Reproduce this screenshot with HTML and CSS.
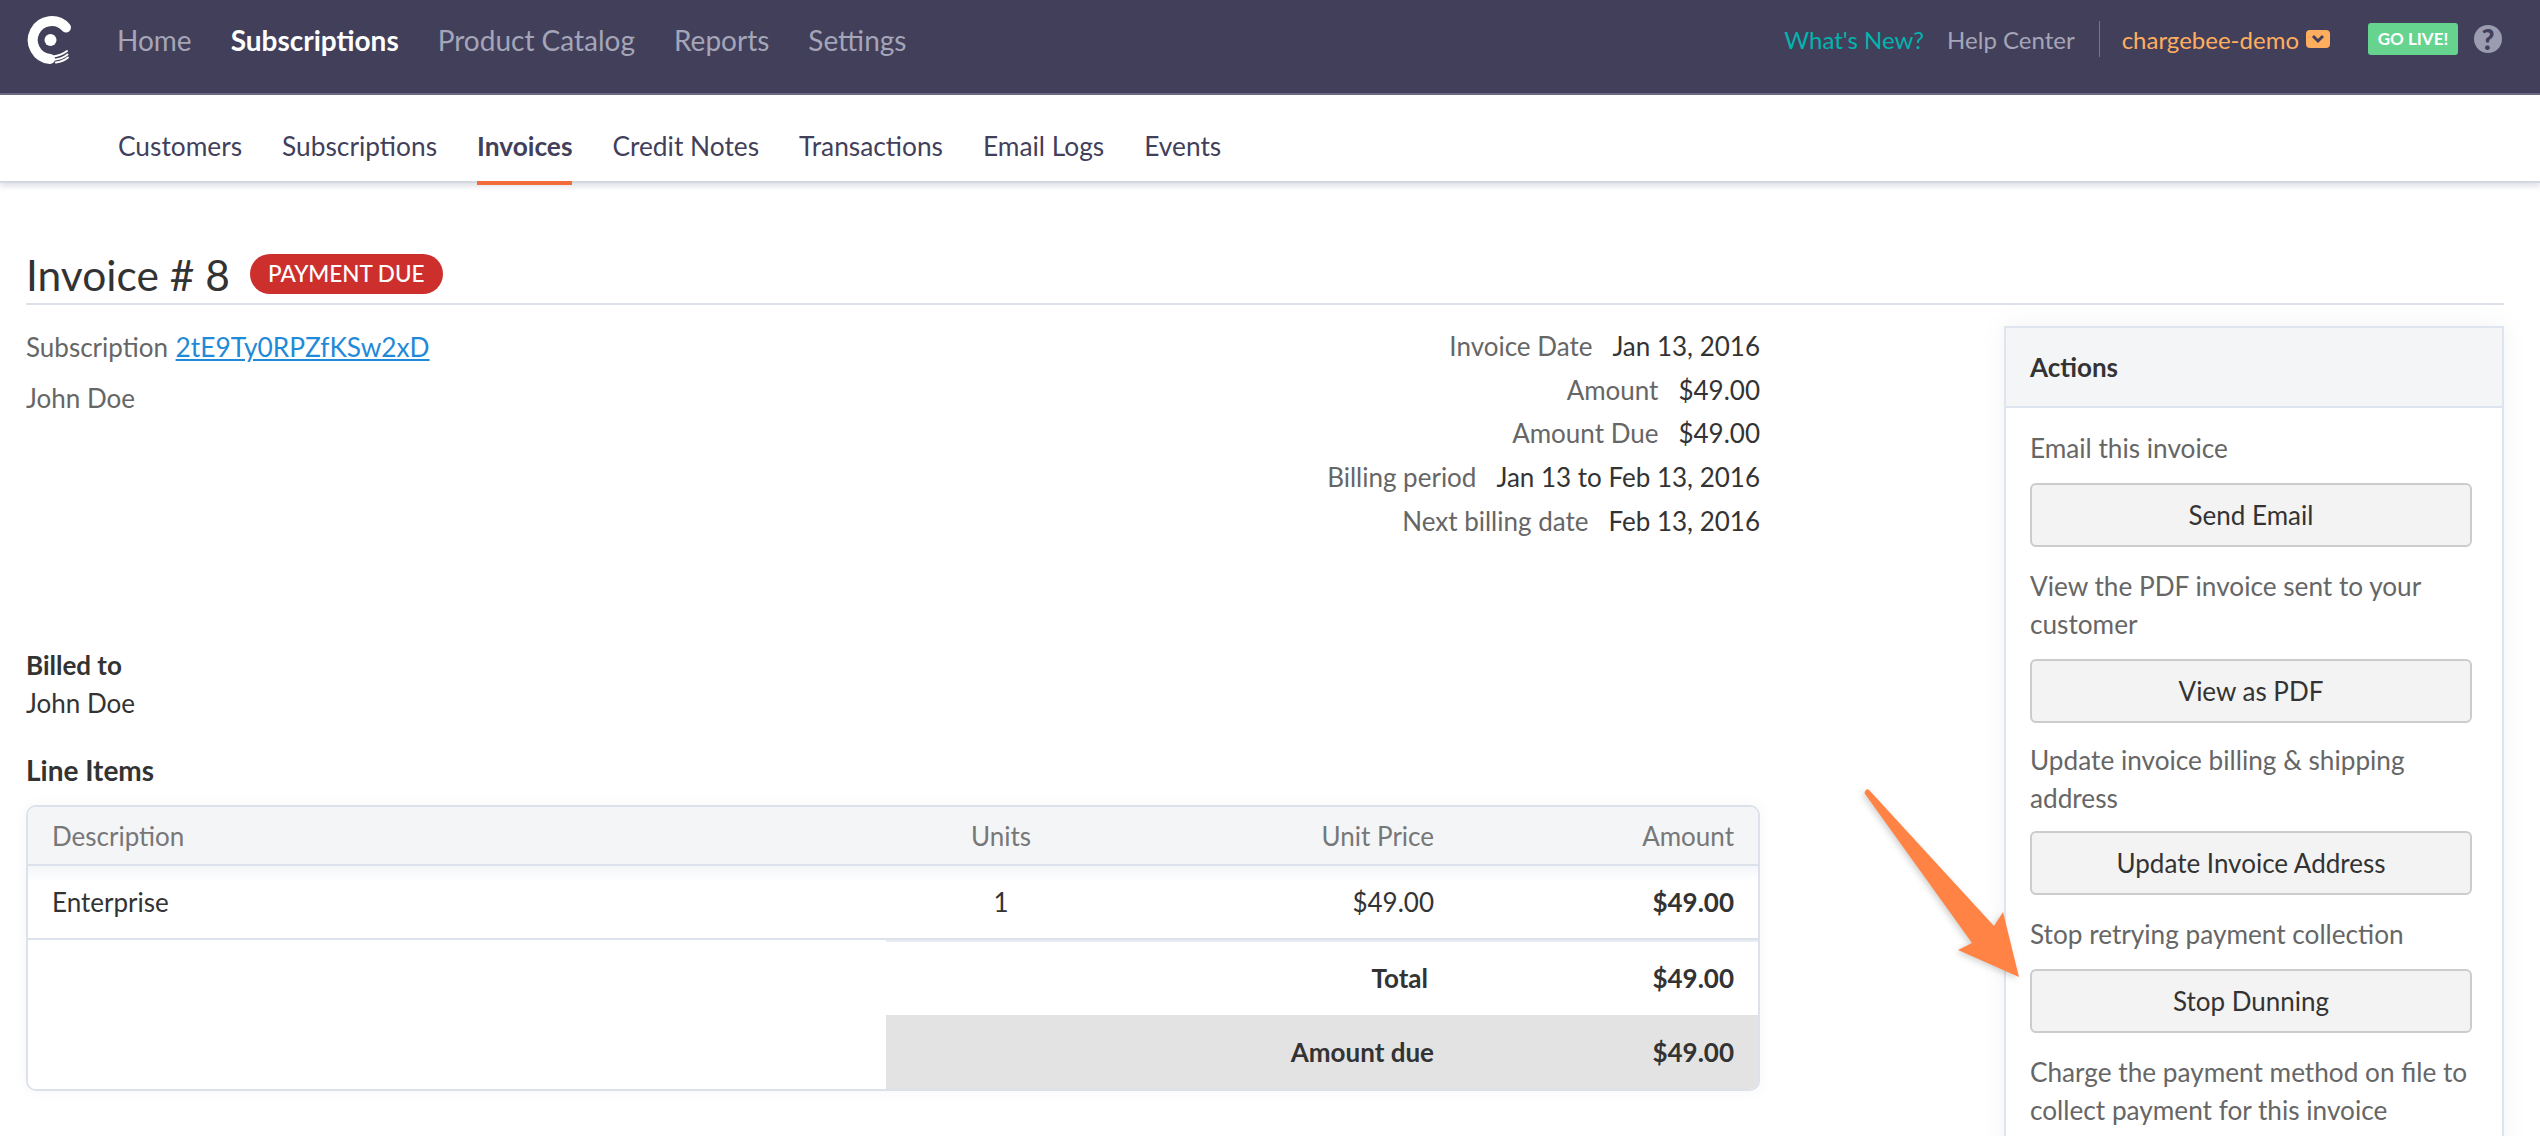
FILE: index.html
```html
<!DOCTYPE html>
<html lang="en">
<head>
  <meta charset="UTF-8">
  <title>Invoice # 8</title>
  <link rel="stylesheet" href="styles.css">
</head>
<body>

  <header class="topbar">
    <svg class="logo" viewBox="0 0 50 50" width="50" height="50">
      <path d="M41 12.5A19 19 0 1 0 25 44" fill="none" stroke="#fff" stroke-width="10" stroke-linecap="round"/>
      <circle cx="25.5" cy="25" r="6" fill="#fff"/>
      <path d="M28 41.5Q36 40.5 42 36M29 44.7Q37 44 42.5 39.5M31 47.5Q38 46.5 43 42.5" fill="none" stroke="#fff" stroke-width="2" stroke-linecap="round"/>
    </svg>
    <nav class="main-nav">
      <a href="#">Home</a>
      <a href="#" class="active">Subscriptions</a>
      <a href="#">Product Catalog</a>
      <a href="#">Reports</a>
      <a href="#">Settings</a>
    </nav>
    <div class="top-right">
      <a href="#" class="whats-new">What's New?</a>
      <a href="#" class="help-link">Help Center</a>
      <span class="top-sep"></span>
      <a href="#" class="site-name">chargebee-demo</a>
      <span class="site-caret">
        <svg viewBox="0 0 24 18" width="24" height="18"><path d="M7 6l5 5 5-5" fill="none" stroke="#423f5b" stroke-width="3"/></svg>
      </span>
      <a href="#" class="go-live">GO LIVE!</a>
      <span class="help-icon">?</span>
    </div>
  </header>

  <nav class="sub-nav">
    <a href="#">Customers</a>
    <a href="#">Subscriptions</a>
    <a href="#" class="active">Invoices</a>
    <a href="#">Credit Notes</a>
    <a href="#">Transactions</a>
    <a href="#">Email Logs</a>
    <a href="#">Events</a>
  </nav>

  <main class="page">
    <div class="title-row">
      <h1>Invoice # 8</h1>
      <span class="badge">PAYMENT DUE</span>
    </div>

    <div class="columns">
      <section class="details">
        <div class="summary">
          <div class="customer">
            <p class="sub-line">Subscription <a href="#">2tE9Ty0RPZfKSw2xD</a></p>
            <p class="customer-name">John Doe</p>
          </div>
          <dl class="meta">
            <div><dt>Invoice Date</dt><dd>Jan 13, 2016</dd></div>
            <div><dt>Amount</dt><dd>$49.00</dd></div>
            <div><dt>Amount Due</dt><dd>$49.00</dd></div>
            <div><dt>Billing period</dt><dd>Jan 13 to Feb 13, 2016</dd></div>
            <div><dt>Next billing date</dt><dd>Feb 13, 2016</dd></div>
          </dl>
        </div>

        <div class="billed">
          <strong>Billed to</strong>
          <p>John Doe</p>
        </div>

        <h2>Line Items</h2>
        <div class="table-wrap">
          <table class="items">
            <colgroup>
              <col class="col-desc"><col class="col-units"><col class="col-price"><col class="col-amount">
            </colgroup>
            <thead>
              <tr><th>Description</th><th class="center">Units</th><th class="right">Unit Price</th><th class="right">Amount</th></tr>
            </thead>
            <tbody>
              <tr class="line"><td>Enterprise</td><td class="center">1</td><td class="right">$49.00</td><td class="right bold">$49.00</td></tr>
              <tr class="total"><td class="blank"></td><td colspan="2" class="right bold total-label">Total</td><td class="right bold">$49.00</td></tr>
              <tr class="due"><td class="blank"></td><td colspan="2" class="right bold">Amount due</td><td class="right bold">$49.00</td></tr>
            </tbody>
          </table>
        </div>
      </section>

      <aside class="actions">
        <h3>Actions</h3>
        <div class="actions-body">
          <p>Email this invoice</p>
          <button>Send Email</button>
          <p>View the PDF invoice sent to your customer</p>
          <button>View as PDF</button>
          <p class="tight">Update invoice billing &amp; shipping address</p>
          <button>Update Invoice Address</button>
          <p>Stop retrying payment collection</p>
          <button>Stop Dunning</button>
          <p>Charge the payment method on file to collect payment for this invoice</p>
        </div>
      </aside>
    </div>
  </main>

  <svg class="callout" viewBox="0 0 170 200" width="170" height="200">
    <path d="M3 2Q5 0 7 3L131 138L140 124L156 189L95 162L109 155L2 6Q1 4 3 2Z" fill="#ff8344"/>
  </svg>

</body>
</html>
```

FILE: styles.css
```css
html, body {
  height: 100%;
  overflow: hidden;
}

body {
  margin: 0;
  background-color: #fff;
  font-family: Lato, "Open Sans", sans-serif;
  font-size: 26px;
  color: #333;
  position: relative;
}

a {
  text-decoration: none;
}

p, h1, h2, h3, dl, dd {
  margin: 0;
}

.topbar {
  height: 95px;
  box-sizing: border-box;
  display: flex;
  align-items: flex-start;
  background-color: #423f5b;
  border-bottom: 2px solid #6b6980;
}

.logo {
  margin: 15px 0 0 25px;
}

.main-nav {
  display: flex;
  gap: 39px;
  margin-left: 42px;
  line-height: 80px;
  font-size: 28px;
}

.main-nav a {
  color: #a4a5b7;
}

.main-nav a.active {
  color: #fff;
  font-weight: bold;
}

.top-right {
  margin-left: auto;
  display: flex;
  align-items: center;
  height: 78px;
  padding-right: 38px;
  font-size: 24px;
}

.whats-new {
  color: #00b5ad;
  margin-right: 23px;
}

.help-link {
  color: #a4a5b7;
}

.top-sep {
  width: 1px;
  height: 36px;
  background-color: #75748a;
  margin: 0 22px 0 24px;
}

.site-name {
  color: #ffae5f;
}

.site-caret {
  display: flex;
  width: 24px;
  height: 18px;
  margin-left: 7px;
  background-color: #ffae5f;
  border-radius: 4px;
}

.go-live {
  margin-left: 38px;
  width: 90px;
  height: 32px;
  line-height: 32px;
  text-align: center;
  font-size: 17px;
  font-weight: bold;
  color: #fff;
  background-color: #66d48f;
  border-radius: 3px;
}

.help-icon {
  margin-left: 16px;
  width: 28px;
  height: 28px;
  line-height: 28px;
  text-align: center;
  border-radius: 50%;
  background-color: #9b9cb0;
  color: #423f5b;
  font-size: 28px;
  font-weight: 900;
}

.sub-nav {
  height: 88px;
  box-sizing: border-box;
  display: flex;
  gap: 40px;
  padding-left: 118px;
  font-size: 26.3px;
  border-bottom: 2px solid #d5d8e3;
  box-shadow: 0 3px 6px rgba(120, 125, 150, 0.25);
}

.sub-nav a {
  color: #423f5b;
  line-height: 102px;
  height: 88px;
  box-sizing: border-box;
}

.sub-nav a.active {
  font-weight: bold;
  border-bottom: 4px solid #f26b3a;
  margin-bottom: -2px;
  height: 90px;
}

.page {
  padding: 0 36px 0 26px;
}

.title-row {
  height: 122px;
  box-sizing: border-box;
  display: flex;
  align-items: center;
  padding-top: 62px;
  border-bottom: 2px solid #dde1ec;
}

h1 {
  font-size: 42.5px;
  font-weight: normal;
  color: #333;
}

.badge {
  margin-left: 20px;
  height: 40px;
  line-height: 40px;
  padding: 0 18px;
  border-radius: 20px;
  background-color: #cd2f2d;
  color: #fff;
  font-size: 22.5px;
  font-weight: 500;
}

.columns {
  display: flex;
  justify-content: space-between;
  align-items: flex-start;
}

.details {
  width: 1734px;
}

.summary {
  display: flex;
  justify-content: space-between;
  height: 341px;
  padding-top: 20px;
  box-sizing: border-box;
}

.sub-line, .customer-name {
  line-height: 44px;
  color: #666;
}

.sub-line a {
  margin-left: 1px;
  font-size: 26.3px;
  color: #1f8ad8;
  text-decoration: underline;
}

.customer-name {
  margin-top: 7px;
}

.meta div {
  display: flex;
  justify-content: flex-end;
  gap: 20px;
  line-height: 43.7px;
}

.meta dt {
  color: #666;
}

.billed {
  line-height: 38px;
}

h2 {
  font-size: 28px;
  line-height: 38px;
  margin: 29px 0 16px;
}

.table-wrap {
  border: 2px solid #dde1ec;
  border-radius: 10px;
  overflow: hidden;
  box-shadow: 0 0 12px rgba(120, 125, 150, 0.08);
}

.items {
  width: 100%;
  border-collapse: collapse;
  table-layout: fixed;
}

.col-desc {
  width: 858px;
}

.col-units {
  width: 230px;
}

.col-price {
  width: 342px;
}

.items th, .items td {
  padding: 0 24px;
}

.items th {
  height: 57px;
  font-weight: normal;
  color: #777;
  background-color: #f4f5f7;
  border-bottom: 2px solid #dde1ec;
  text-align: left;
}

.items .center {
  text-align: center;
}

.items .right {
  text-align: right;
}

.items .bold {
  font-weight: bold;
}

.line td {
  height: 72px;
  border-bottom: 2px solid #dde1ec;
  background: linear-gradient(#f4f6f9, #fff 22%);
}

.total td {
  height: 75px;
  box-shadow: inset 0 2px 0 #e9ecf3;
}

.total .blank {
  box-shadow: none;
}

.total .total-label {
  padding-right: 30px;
}

.due td {
  height: 74px;
  background-color: #e3e3e3;
}

.due .blank {
  background-color: #fff;
}

.actions {
  width: 500px;
  box-sizing: border-box;
  margin-top: 21px;
  border: 2px solid #dfe5ef;
  box-shadow: 0 0 20px rgba(120, 125, 150, 0.1);
}

.actions h3 {
  height: 78px;
  line-height: 78px;
  padding-left: 24px;
  font-size: 26px;
  background-color: #f4f5f7;
  border-bottom: 2px solid #dfe5ef;
}

.actions-body {
  padding: 21px 30px 20px 24px;
}

.actions-body p {
  font-size: 26.2px;
  line-height: 38px;
  color: #666;
  margin-bottom: 16px;
}

.actions-body p.tight {
  margin-top: -2px;
  margin-bottom: 14px;
}

.actions-body button {
  display: block;
  width: 100%;
  height: 64px;
  margin-bottom: 20px;
  font-family: inherit;
  font-size: 26px;
  color: #333;
  background-color: #f3f3f3;
  border: 2px solid #ccc;
  border-radius: 6px;
}

.callout {
  position: absolute;
  left: 1863px;
  top: 788px;
  filter: drop-shadow(-2px 2px 3px rgba(0, 0, 0, 0.18));
}
```
